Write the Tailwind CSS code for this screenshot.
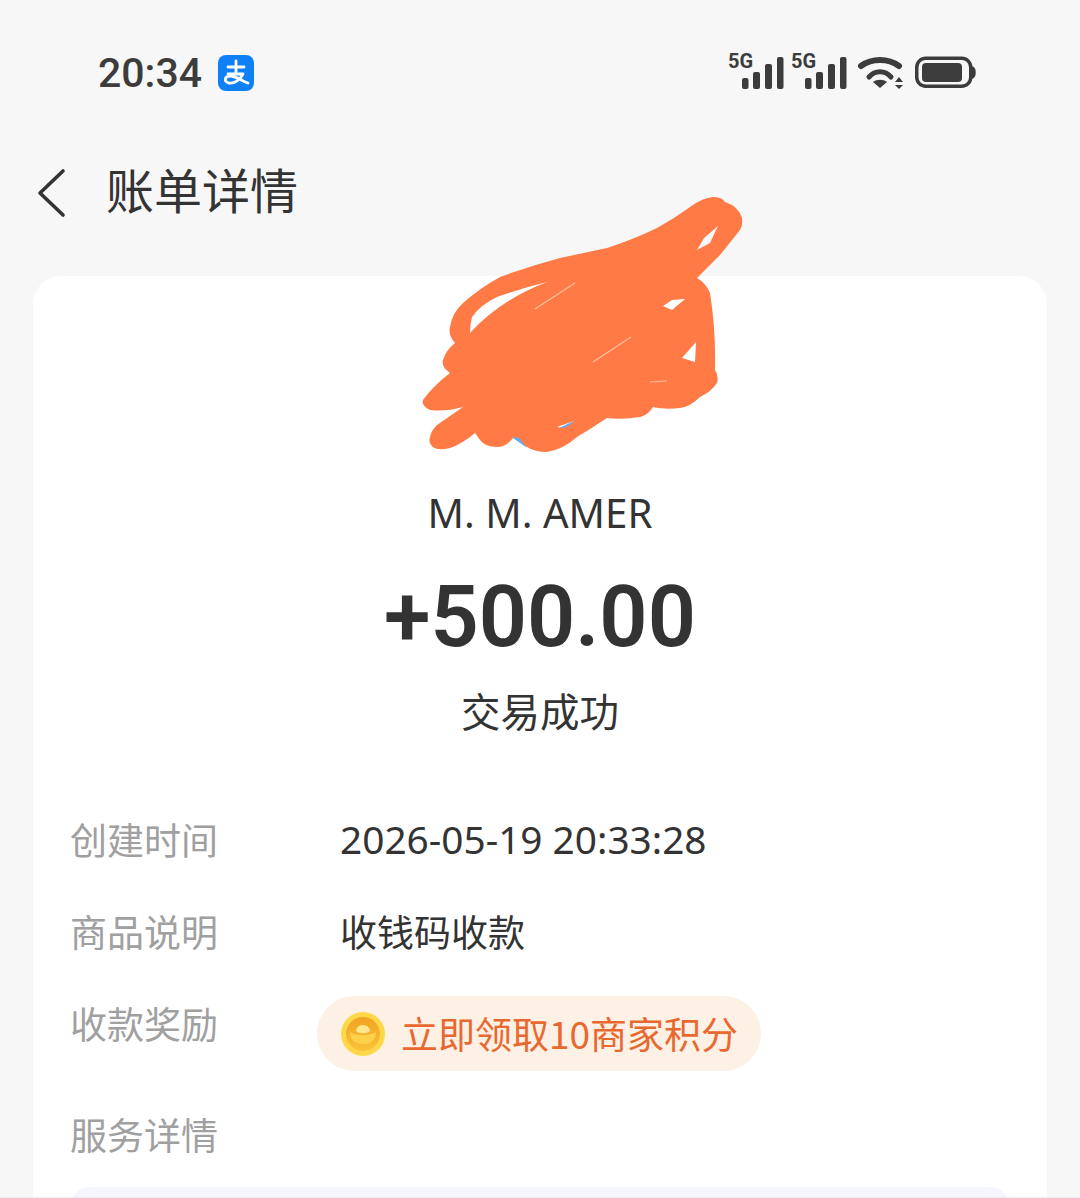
<!DOCTYPE html>
<html lang="zh">
<head>
  <meta charset="UTF-8" />
  <title>账单详情</title>
  <script src="https://cdn.jsdelivr.net/npm/@tailwindcss/browser@4"></script>
</head>
<body class="bg-[#f7f7f7] font-['Noto_Sans_CJK_SC',sans-serif] overflow-hidden">
  <div class="relative h-[1198px] w-[1080px] overflow-hidden">
    <!-- status bar -->
    <div class="flex h-[146px] items-center justify-between pl-[98px] pr-[104px]">
      <div class="flex items-center gap-[16px]">
        <span class="font-['Roboto',sans-serif] text-[41px] leading-none font-medium text-[#3c3c3c]">20:34</span>
        <svg class="h-[36px] w-[36px]" viewBox="0 0 36 36" fill="none">
          <rect width="36" height="36" rx="8" fill="#0f80f5" />
          <path d="M10 12H26M18 6V19M10 19H25C22 25 16 29 11 28C5 27 7 21 12 21C18 21 24 26 30 28" stroke="#fff" stroke-width="2.8" stroke-linecap="round" stroke-linejoin="round" />
        </svg>
      </div>
      <div class="mb-[6px] flex h-[40px] items-start gap-[11px]">
        <div class="flex items-start gap-[7px]">
          <div class="relative h-[40px] w-[56px]">
            <span class="absolute top-0 left-0 font-['Roboto',sans-serif] text-[20px] leading-[22px] font-bold text-[#3c3c3c]">5G</span>
            <svg class="h-[40px] w-[56px]" viewBox="0 0 56 40" fill="#3c3c3c">
              <rect x="14" y="28" width="6.5" height="11" rx="2" /><rect x="25" y="22" width="7" height="17" rx="2" /><rect x="37" y="14" width="7" height="25" rx="2" /><rect x="49" y="7" width="6.5" height="32" rx="2" />
            </svg>
          </div>
          <div class="relative h-[40px] w-[56px]">
            <span class="absolute top-0 left-0 font-['Roboto',sans-serif] text-[20px] leading-[22px] font-bold text-[#3c3c3c]">5G</span>
            <svg class="h-[40px] w-[56px]" viewBox="0 0 56 40" fill="#3c3c3c">
              <rect x="14" y="28" width="6.5" height="11" rx="2" /><rect x="25" y="22" width="7" height="17" rx="2" /><rect x="37" y="14" width="7" height="25" rx="2" /><rect x="49" y="7" width="6.5" height="32" rx="2" />
            </svg>
          </div>
        </div>
        <svg class="h-[40px] w-[46px]" viewBox="0 0 46 40" fill="none">
          <path d="M3 16C14 8 30 8 41 16" stroke="#3c3c3c" stroke-width="6" stroke-linecap="round" />
          <path d="M11 27C17 20 27 20 33 27" stroke="#3c3c3c" stroke-width="5" stroke-linecap="round" />
          <path d="M15 32C19 29 25 29 29 32L22 38Z" fill="#3c3c3c" />
          <path d="M41 27L45 32H37ZM37 35H45L41 39Z" fill="#3c3c3c" />
        </svg>
        <svg class="h-[40px] w-[61px]" viewBox="0 0 61 40" fill="none">
          <rect x="1.75" y="8.25" width="54" height="28" rx="9" stroke="#3c3c3c" stroke-width="3.5" />
          <rect x="7" y="13" width="40" height="19" rx="4" fill="#3c3c3c" />
          <path d="M57 17C61 18 61 27 57 28Z" fill="#3c3c3c" stroke="#3c3c3c" stroke-width="1.5" />
        </svg>
      </div>
    </div>

    <!-- header -->
    <div class="flex h-[90px] items-center gap-[39px] pl-[37px]">
      <svg class="mt-[4px] h-[50px] w-[30px]" viewBox="0 0 30 50" fill="none">
        <path d="M26 3L3 25L26 47" stroke="#333" stroke-width="3.6" stroke-linecap="round" stroke-linejoin="round" />
      </svg>
      <h1 class="mb-[7px] text-[48px] leading-none text-[#333]">账单详情</h1>
    </div>

    <!-- card -->
    <div class="mx-[33px] mt-[40px] h-[1000px] rounded-[28px] bg-white px-[37px]">
      <div class="flex flex-col items-center">
        <div class="h-[170px] w-[170px]"></div>
        <p class="mt-[40px] font-['Noto_Sans',sans-serif] text-[40.2px] leading-[54px] text-[#333]">M. M. AMER</p>
        <p class="mt-[30px] font-['Roboto',sans-serif] text-[84.5px] leading-[96px] font-semibold text-[#333]">+500.00</p>
        <p class="mt-[16px] text-[39.5px] leading-[56px] text-[#333]">交易成功</p>
      </div>
      <div class="mt-[74px] grid grid-cols-[270px_1fr] items-start">
        <span class="h-[92px] text-[37px] leading-[54px] text-[#a0a0a0]">创建时间</span>
        <span class="font-['Noto_Sans',sans-serif] text-[38.8px] leading-[54px] text-[#333]">2026-05-19 20:33:28</span>
        <span class="h-[92px] text-[37px] leading-[54px] text-[#a0a0a0]">商品说明</span>
        <span class="text-[37px] leading-[54px] text-[#333]">收钱码收款</span>
        <span class="h-[111px] text-[37px] leading-[54px] text-[#a0a0a0]">收款奖励</span>
        <div class="-ml-[23px] flex h-[75px] w-[444px] items-center gap-[16px] rounded-full bg-[#fdf0e4] pl-[24px]">
          <svg class="h-[44px] w-[44px]" viewBox="0 0 44 44">
            <defs>
              <linearGradient id="coinInner" x1="0" y1="0" x2="0" y2="1">
                <stop offset="0" stop-color="#f0a322" />
                <stop offset="1" stop-color="#fbc23a" />
              </linearGradient>
            </defs>
            <circle cx="22" cy="22" r="22" fill="#ffd84a" />
            <circle cx="22" cy="22" r="17" fill="url(#coinInner)" />
            <path d="M9 20C14 24 30 24 35 20C35 28 30 32 22 32C14 32 9 28 9 20Z" fill="#ffd04a" />
            <path d="M15 19C16 11 28 11 29 19C26 22 18 22 15 19Z" fill="#ffe88f" />
          </svg>
          <span class="text-[37px] leading-none text-[#e8692f]">立即领取10商家积分</span>
        </div>
      </div>
      <p class="text-[37px] leading-[54px] text-[#a0a0a0]">服务详情</p>
      <div class="mt-[26px] h-[200px] rounded-[20px] bg-[#f6f7fe]"></div>
    </div>

    <!-- scribble over the avatar -->
    <svg class="absolute top-0 left-0 h-[1198px] w-[1080px]" viewBox="0 0 1080 1198" fill="none">
      <path d="M557 429L580 418L575 427L560 433Z" fill="#5aaef5" />
      <path fill="#ff7a45" fill-rule="evenodd" d="M713 197Q722 197 725 202Q738 206 742 218Q743 225 740 230L720 255L697 278Q706 283 710 293Q716 330 715 370Q719 376 717 383Q712 391 700 397Q690 407 680 408Q665 410 653 407Q648 415 640 417Q622 420 607 418Q592 428 577 437Q562 450 547 452Q535 452 527 447L513 438Q505 448 497 447Q485 447 480 440L475 433Q462 444 450 448Q438 451 433 447Q428 443 430 437Q431 431 437 425L463 407Q445 412 430 410Q421 406 423 400Q433 386 450 373Q441 367 443 360Q446 350 455 343Q448 335 450 327Q452 313 463 303Q480 288 500 277Q530 266 560 258L607 248Q632 240 657 228Q675 218 690 207Q702 198 713 197ZM718 226L710 243L697 250L704 238ZM547 282Q500 300 470 333Q470 325 472 317Q480 305 497 297Q522 288 547 282ZM685 299L672 310L663 306L672 300ZM696 342L695 362L682 358ZM557 427L574 421Q570 426 563 428Z" />
      <path d="M512 437L527 448L519 438Z" fill="#5aaef5" />
      <path d="M535 309L575 283M593 362L631 337M650 382L667 381" stroke="#ffc09f" stroke-width="1.2" />
    </svg>

    <!-- faint line along the bottom edge of the capture -->
    <div class="absolute right-0 bottom-0 left-0 h-px bg-[#ececf0]"></div>
  </div>
</body>
</html>
